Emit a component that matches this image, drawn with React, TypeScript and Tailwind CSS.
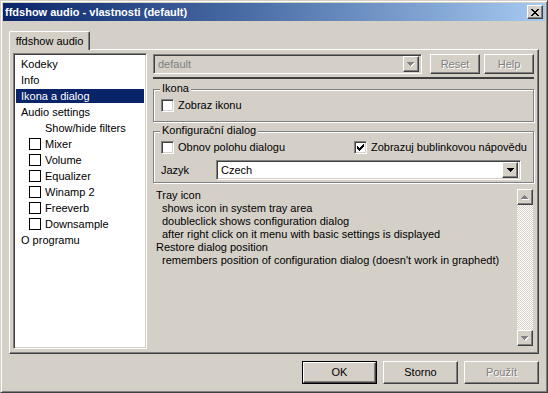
import React from 'react';

// classic windows 3d edges
const raised = 'border border-t-white border-l-white border-r-[#404040] border-b-[#404040] shadow-[inset_-1px_-1px_0_#808080]';
const sunken = 'border border-t-[#808080] border-l-[#808080] border-r-white border-b-white shadow-[inset_1px_1px_0_#404040,inset_-1px_-1px_0_#d4d0c8]';
const grayText = 'text-[#808080] [text-shadow:1px_1px_0_#fff]';

const Pixels: React.FC<{ rows: string[]; color: string; shadow?: boolean }> = ({ rows, color, shadow }) => {
    const w = rows[0].length;
    const h = rows.length;
    const rects: React.ReactNode[] = [];
    const draw = (dx: number, fill: string, key: string) => {
        rows.forEach((row, y) => {
            row.split('').forEach((c, x) => {
                if (c === 'X') rects.push(<rect key={`${key}${x}-${y}`} x={x + dx} y={y + dx} width={1} height={1} fill={fill} />);
            });
        });
    };
    if (shadow) draw(1, '#ffffff', 's');
    draw(0, color, 'm');
    return (
        <svg width={w + (shadow ? 1 : 0)} height={h + (shadow ? 1 : 0)} shapeRendering="crispEdges">
            {rects}
        </svg>
    );
};

const ARROW_DOWN = ['XXXXXXX', '.XXXXX.', '..XXX..', '...X...'];
const ARROW_UP = ['...X...', '..XXX..', '.XXXXX.', 'XXXXXXX'];
const CLOSE_X = ['XX....XX', '.XX..XX.', '..XXXX..', '...XX...', '..XXXX..', '.XX..XX.', 'XX....XX'];
const CHECK = ['......X', '.....XX', 'X...XXX', 'XX.XXX.', 'XXXXX..', '.XXX...', '..X....'];

const CheckBox: React.FC<{ checked?: boolean }> = ({ checked }) => (
    <div className={`w-[13px] h-[13px] bg-white flex items-center justify-center shrink-0 ${sunken}`}>
        {checked && <Pixels rows={CHECK} color="#000" />}
    </div>
);

const Button: React.FC<{ label: string; width: string; disabled?: boolean; isDefault?: boolean }> = ({ label, width, disabled, isDefault }) => {
    if (isDefault) {
        return (
            <div className={`${width} h-[23px] border border-black`}>
                <div className={`w-full h-full flex items-center justify-center ${raised}`}>{label}</div>
            </div>
        );
    }
    return (
        <div className={`${width} h-[23px] flex items-center justify-center ${raised} ${disabled ? grayText : ''}`}>
            {label}
        </div>
    );
};

const ComboBox: React.FC<{ value: string; width: string; disabled?: boolean }> = ({ value, width, disabled }) => (
    <div className={`${width} h-[20px] flex items-center ${sunken} ${disabled ? 'bg-[#d4d0c8]' : 'bg-white'} p-[2px]`}>
        <span className={`flex-1 pl-[2px] leading-[14px] ${disabled ? 'text-[#808080]' : ''}`}>{value}</span>
        <div className={`w-[16px] h-[16px] bg-[#d4d0c8] flex items-center justify-center ${raised}`}>
            <Pixels rows={ARROW_DOWN} color={disabled ? '#808080' : '#000'} shadow={disabled} />
        </div>
    </div>
);

const GroupBox: React.FC<{ title: string; className: string; children: React.ReactNode }> = ({ title, className, children }) => (
    <div className={`relative border border-[#808080] shadow-[inset_1px_1px_0_#fff,1px_1px_0_#fff] ${className}`}>
        <span className="absolute -top-[8px] left-[6px] px-[2px] bg-[#d4d0c8] leading-[13px]">{title}</span>
        {children}
    </div>
);

const treeItems = [
    { label: 'Kodeky', indent: 'pl-[5px]' },
    { label: 'Info', indent: 'pl-[5px]' },
    { label: 'Ikona a dialog', indent: 'pl-[5px]', selected: true },
    { label: 'Audio settings', indent: 'pl-[5px]' },
    { label: 'Show/hide filters', indent: 'pl-[29px]' },
    { label: 'Mixer', check: true },
    { label: 'Volume', check: true },
    { label: 'Equalizer', check: true },
    { label: 'Winamp 2', check: true },
    { label: 'Freeverb', check: true },
    { label: 'Downsample', check: true },
    { label: 'O programu', indent: 'pl-[5px]' },
];

const helpLines = [
    { text: 'Tray icon' },
    { text: 'shows icon in system tray area', sub: true },
    { text: 'doubleclick shows configuration dialog', sub: true },
    { text: 'after right click on it menu with basic settings is displayed', sub: true },
    { text: 'Restore dialog position' },
    { text: "remembers position of configuration dialog (doesn't work in graphedt)", sub: true },
];

const ScrollBar: React.FC = () => (
    <div className="w-[16px] h-full flex flex-col">
        <div className={`w-[16px] h-[16px] bg-[#d4d0c8] flex items-center justify-center ${raised}`}>
            <Pixels rows={ARROW_UP} color="#808080" shadow />
        </div>
        <div className="flex-1 bg-[image:repeating-conic-gradient(#fff_0_25%,#d4d0c8_0_50%)] bg-[length:2px_2px]" />
        <div className={`w-[16px] h-[16px] bg-[#d4d0c8] flex items-center justify-center ${raised}`}>
            <Pixels rows={ARROW_DOWN} color="#808080" shadow />
        </div>
    </div>
);

const App: React.FC = () => {
    return (
        <div className="w-[548px] h-[393px] bg-[#d4d0c8] border border-t-[#d4d0c8] border-l-[#d4d0c8] border-r-[#404040] border-b-[#404040] shadow-[inset_1px_1px_0_#fff,inset_-1px_-1px_0_#808080] p-[2px] flex flex-col text-[11px] text-black font-['Liberation_Sans',Arial,sans-serif] select-none">
            {/* title bar */}
            <div className="h-[18px] flex items-center bg-linear-to-r from-[#0a246a] to-[#a6caf0]">
                <span className="flex-1 pl-[2px] text-white font-bold leading-[18px]">ffdshow audio - vlastnosti (default)</span>
                <div className={`w-[16px] h-[14px] mr-[2px] bg-[#d4d0c8] flex items-center justify-center ${raised}`}>
                    <Pixels rows={CLOSE_X} color="#000" />
                </div>
            </div>

            <div className="flex flex-col pl-[6px] pt-[10px]">
                {/* tab header */}
                <div className="flex">
                    <div className="relative z-10 -mb-[1px] w-[81px] h-[19px] bg-[#d4d0c8] border-t border-l border-r border-t-white border-l-white border-r-[#404040] rounded-t-[2px] shadow-[inset_-1px_0_0_#808080] flex justify-center pt-[2px] leading-[14px]">
                        ffdshow audio
                    </div>
                </div>

                {/* tab sheet */}
                <div className="w-[530px] h-[305px] border border-t-white border-l-white border-r-[#404040] border-b-[#404040] shadow-[inset_-1px_-1px_0_#808080] pl-[3px] pt-[3px] flex">
                    {/* tree */}
                    <div className={`w-[134px] h-[296px] bg-white ${sunken} p-[2px] flex flex-col`}>
                        {treeItems.map(item => (
                            <div key={item.label} className="h-[16px] flex items-center">
                                {item.check ? (
                                    <div className="flex items-center pl-[13px] gap-[4px]">
                                        <div className="w-[12px] h-[12px] border border-black bg-white" />
                                        <span className="leading-[14px]">{item.label}</span>
                                    </div>
                                ) : (
                                    <div className={`flex-1 h-[14px] leading-[14px] ${item.indent} ${item.selected ? 'bg-[#0a246a] text-white' : ''}`}>
                                        {item.label}
                                    </div>
                                )}
                            </div>
                        ))}
                    </div>

                    {/* page */}
                    <div className="w-[381px] ml-[6px] mt-[1px] flex flex-col">
                        <div className="flex items-center">
                            <ComboBox value="default" width="w-[269px]" disabled />
                            <div className="ml-[8px]">
                                <div className={`w-[50px] h-[20px] flex items-center justify-center ${raised} ${grayText}`}>Reset</div>
                            </div>
                            <div className="ml-[4px]">
                                <div className={`w-[50px] h-[20px] flex items-center justify-center ${raised} ${grayText}`}>Help</div>
                            </div>
                        </div>
                        <div className="mt-[3px] h-[2px] bg-[#404040]" />

                        <GroupBox title="Ikona" className="mt-[10px] h-[33px] pt-[9px] pl-[7px]">
                            <label className="flex items-center gap-[4px]">
                                <CheckBox />
                                <span className="leading-[13px]">Zobraz ikonu</span>
                            </label>
                        </GroupBox>

                        <GroupBox title="Konfigurační dialog" className="mt-[9px] h-[52px] pt-[9px] pl-[7px]">
                            <div className="flex items-center">
                                <label className="w-[193px] flex items-center gap-[4px]">
                                    <CheckBox />
                                    <span className="leading-[13px]">Obnov polohu dialogu</span>
                                </label>
                                <label className="flex items-center gap-[4px]">
                                    <CheckBox checked />
                                    <span className="leading-[13px]">Zobrazuj bublinkovou nápovědu</span>
                                </label>
                            </div>
                            <div className="flex items-center mt-[6px]">
                                <span className="w-[55px] leading-[13px]">Jazyk</span>
                                <ComboBox value="Czech" width="w-[305px]" />
                            </div>
                        </GroupBox>

                        <div className="mt-[5px] h-[158px] flex">
                            <div className="flex-1 pl-[3px] pt-[1px] flex flex-col">
                                {helpLines.map(line => (
                                    <div key={line.text} className={`leading-[13px] ${line.sub ? 'pl-[6px]' : ''}`}>{line.text}</div>
                                ))}
                            </div>
                            <div className="mr-[1px] pt-[1px] h-full">
                                <ScrollBar />
                            </div>
                        </div>
                    </div>
                </div>

                {/* dialog buttons */}
                <div className="w-[530px] flex justify-end gap-[6px] mt-[7px]">
                    <Button label="OK" width="w-[75px]" isDefault />
                    <Button label="Storno" width="w-[75px]" />
                    <Button label="Použít" width="w-[75px]" disabled />
                </div>
            </div>
        </div>
    );
};

export default App;
